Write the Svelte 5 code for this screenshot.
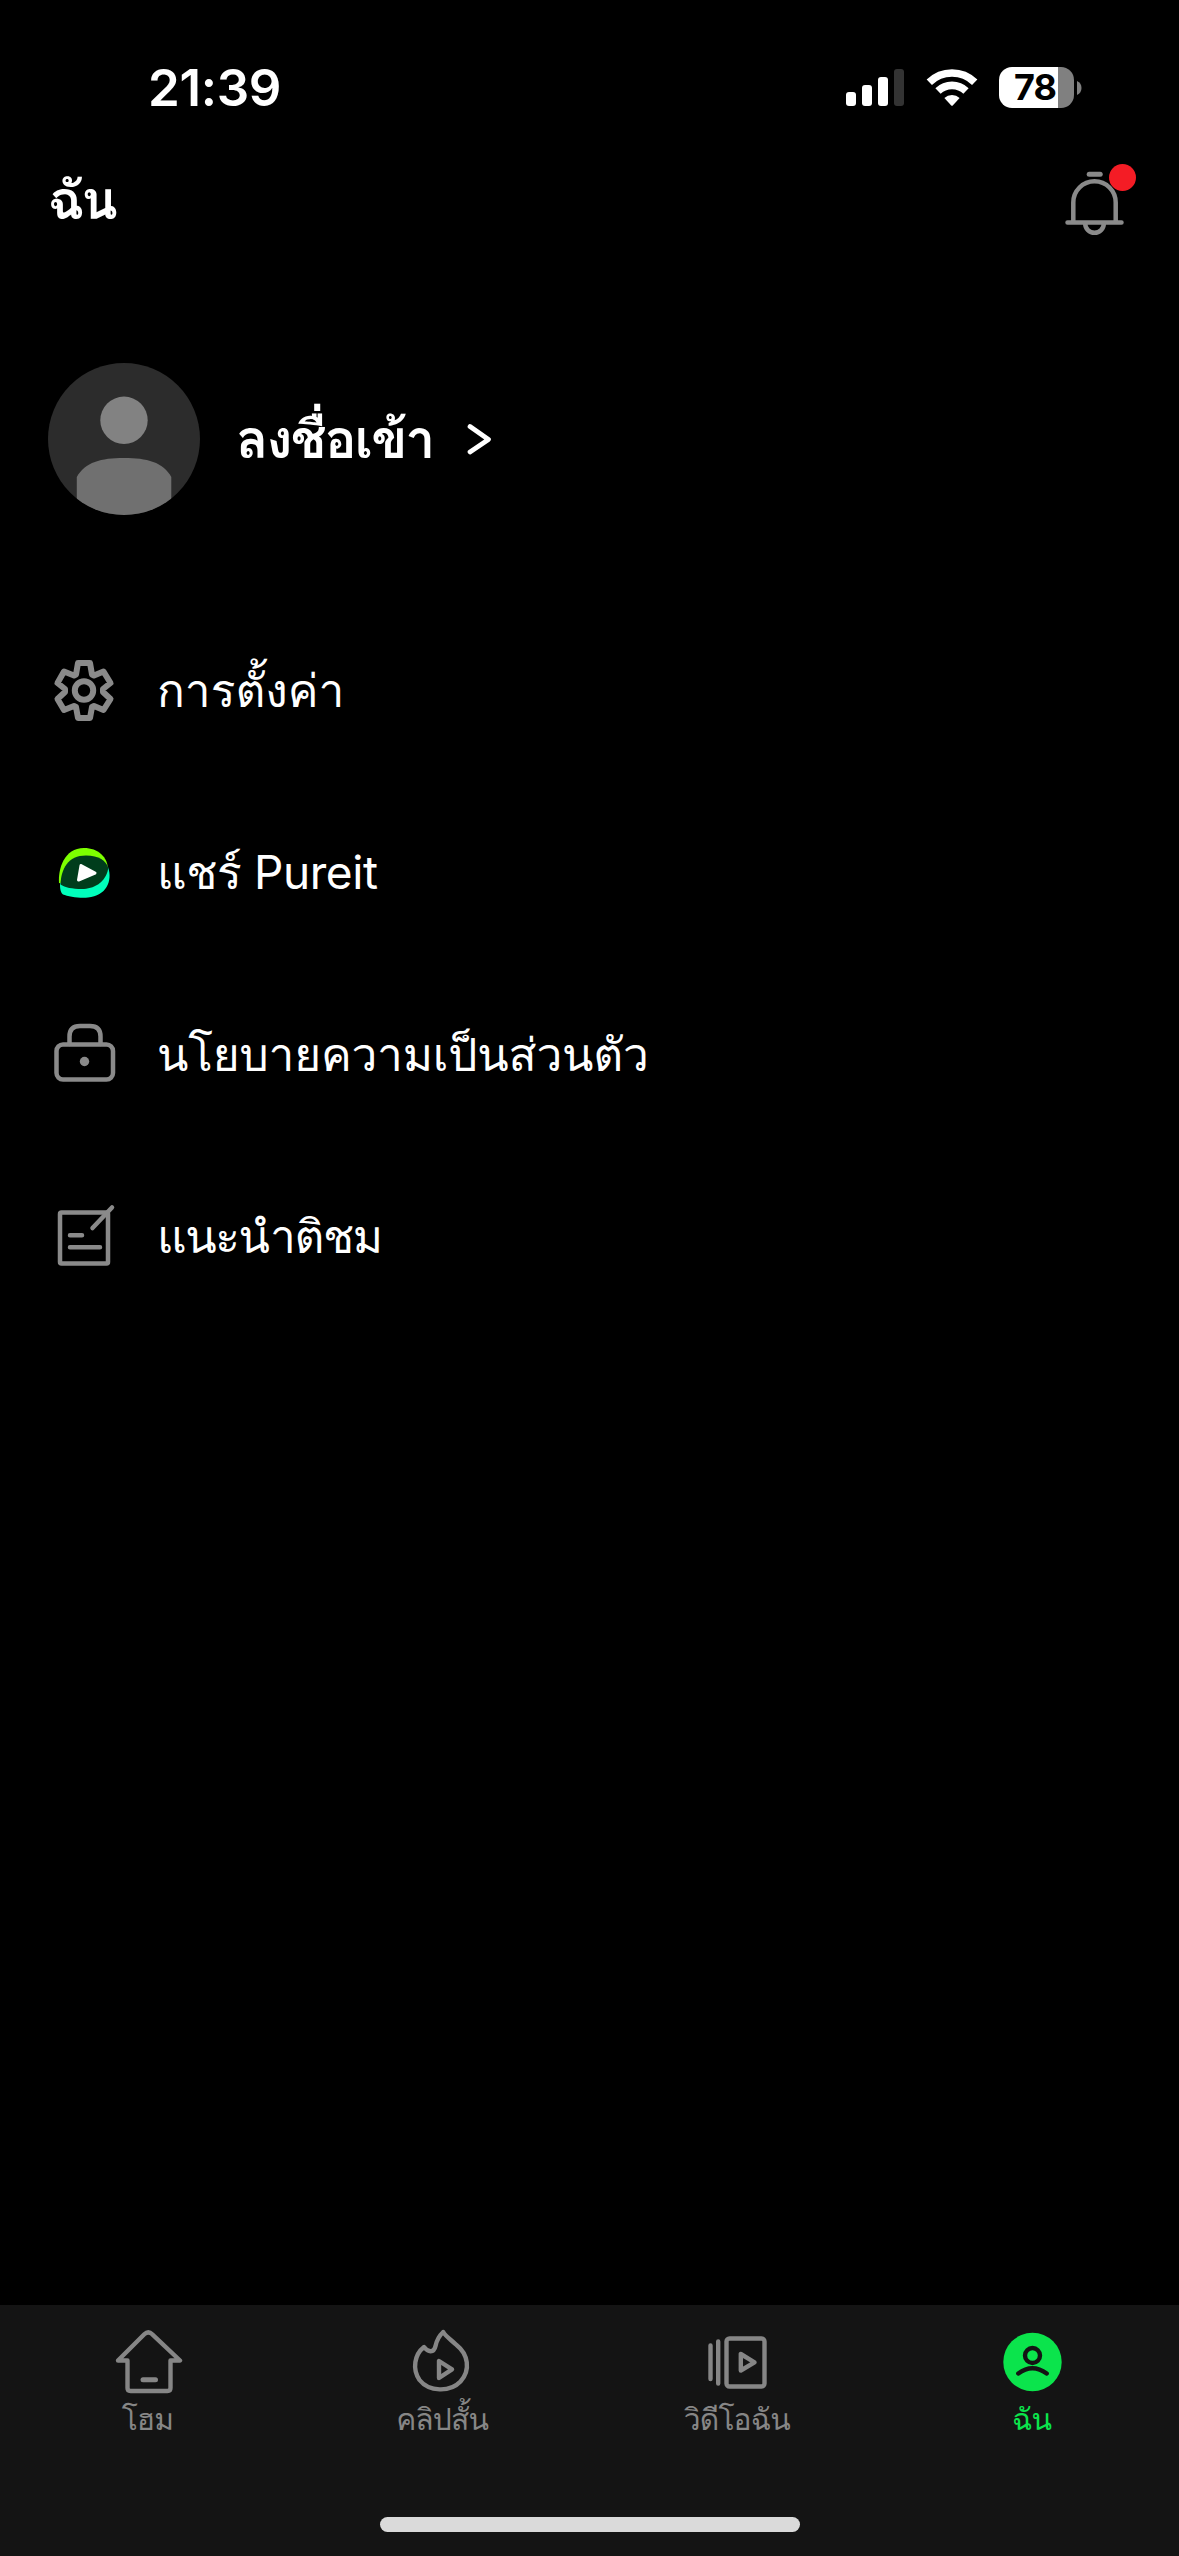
<script>
	const menu = [
		{ icon: 'gear', label: 'การตั้งค่า', tracking: 0 },
		{ icon: 'app', label: 'แชร์ Pureit', tracking: -0.4 },
		{ icon: 'lock', label: 'นโยบายความเป็นส่วนตัว', tracking: -0.2 },
		{ icon: 'feedback', label: 'แนะนำติชม', tracking: -1.4 }
	];

	const tabs = [
		{ icon: 'home', label: 'โฮม' },
		{ icon: 'clips', label: 'คลิปสั้น' },
		{ icon: 'videos', label: 'วิดีโอฉัน' },
		{ icon: 'me', label: 'ฉัน' }
	];

	let active = $state('me');
</script>

<div class="screen">
	<div class="status">
		<span class="time">21:39</span>
		<div class="indicators">
			<svg class="signal" width="58" height="38" viewBox="0 0 58 38" fill="#fff">
				<rect x="0" y="23" width="10" height="14" rx="3" />
				<rect x="16" y="16" width="10" height="21" rx="3" />
				<rect x="32" y="8" width="10" height="29" rx="3" />
				<rect x="48" y="0" width="10" height="37" rx="3" fill="#333" />
			</svg>
			<svg class="wifi" width="52" height="38" viewBox="0 0 52 38">
				<path d="M3.3 13.3a32.5 32.5 0 0 1 45.4 0M12 22a20.2 20.2 0 0 1 28 0" fill="none" stroke="#fff" stroke-width="7.6" />
				<path d="M18.4 29a11 11 0 0 1 15.2 0L27 36.2q-1 1-2 0z" fill="#fff" />
			</svg>
			<div class="battery"><span>78</span></div>
			<svg class="nub" width="5" height="14" viewBox="0 0 5 14"><path d="M0 0q4.500 2 4.500 7T0 14z" fill="#808080" /></svg>
		</div>
	</div>

	<header>
		<h1>ฉัน</h1>
		<div class="bell">
			<svg width="60" height="66" viewBox="0 0 60 66" fill="none" stroke="#8a8a8a" stroke-width="4.500" stroke-linecap="round">
				<path d="M24.200 4.300H35.200" stroke-width="5" />
				<path d="M8.300 51V32.500a21.200 21.200 0 0 1 42.400 0V51M2.500 52.500H56.500" />
				<path d="M20.200 53.500a9.300 9.300 0 0 0 18.600 0" />
			</svg>
			<i class="dot"></i>
		</div>
	</header>

	<section class="profile">
		<svg width="152" height="152" viewBox="0 0 152 152">
			<clipPath id="round"><circle cx="76" cy="76" r="76" /></clipPath>
			<g clip-path="url(#round)">
				<path d="M0 0H152V152H0z" fill="#2c2c2c" />
				<circle cx="76" cy="57.300" r="23.700" fill="#828282" />
				<path d="M28.800 152V114C37 99 53 95 76 95s39 4 47.300 19v38z" fill="#707070" />
			</g>
		</svg>
		<h2>ลงชื่อเข้า</h2>
		<svg class="chevron" width="26" height="32" viewBox="0 0 26 32">
			<path d="M3 3.500L21.500 16.500L3 29" fill="none" stroke="#fff" stroke-width="4.700" stroke-linecap="round" stroke-linejoin="round" />
		</svg>
	</section>

	<nav class="menu">
		{#each menu as item}
			<div class="row">
				<svg width="72" height="72" viewBox="0 0 72 72" fill="none" stroke="#8a8a8a" stroke-width="4.500" stroke-linecap="round" stroke-linejoin="round">
					{#if item.icon === 'gear'}
						<g stroke-width="6">
							<path d="M30 9H42L44 20.500L46 21.500L55.500 17.500L62.500 29L55 35V38L62.500 45L55.500 56L46 52L44 53L42 64H30L28 53L26 52L16 56L9.500 45L17 38V35L9.500 29L16 17.500L26 21.500L28 20.500z" />
							<circle cx="36" cy="36.500" r="9.200" />
						</g>
					{:else if item.icon === 'app'}
						<g stroke="none" transform="translate(0 1)">
							<path d="M11 46C10 32 16 11 36 11C50 11 60 20 60 33C60 42 30 50 11 46z" fill="#7dff00" />
							<path d="M12 46C30 50 50 45 60 30C65 44 58 59 40 60.500C32 61.500 20 59.500 15 57.500C12 55 12 50 12 46z" fill="#0fb" />
							<path d="M12.500 47.500C13 32 20 18.500 38 18.500C51 18.500 58 23.500 60.300 31C58 46 45 52 34 52C24 52 17 50.500 12.500 47.500z" fill="#003d1c" />
							<path d="M33 28.500L47 36L30.500 43z" fill="#fff" stroke="#fff" stroke-width="3" />
						</g>
					{:else if item.icon === 'lock'}
						<rect x="8.500" y="26.500" width="56.500" height="35" rx="6.500" />
						<path d="M21.500 26V18.500q0-10.500 10.500-10.500h10q10.500 0 10.500 10.500V26" />
						<circle cx="36.500" cy="43.500" r="4.700" fill="#8a8a8a" stroke="none" />
					{:else}
						<rect x="12" y="12.500" width="48" height="51" rx="1.500" />
						<path d="M44.500 28L64 7.500M22 35.300H34M22 47.200H52" />
					{/if}
				</svg>
				<span style="letter-spacing: {item.tracking}px">{item.label}</span>
			</div>
		{/each}
	</nav>

	<footer>
		<div class="tabs">
			{#each tabs as tab}
				<button class:active={tab.icon === active} onclick={() => (active = tab.icon)}>
					<svg width="72" height="72" viewBox="0 0 72 72" fill="none" stroke="currentColor" stroke-width="4.400" stroke-linecap="round" stroke-linejoin="round">
						{#if tab.icon === 'home'}
							<path d="M16.500 36.500H7L33.300 10.300Q37.300 6.300 41.300 10.300L69 36.500H59.500V64q0 3-3 3H19.500q-3 0-3-3z" />
							<path d="M32 55.700H44.500" stroke-width="5" />
						{:else if tab.icon === 'clips'}
							<path d="M18 23C8.500 30.500 6 45 13.500 56C23 68 44 68.500 54.500 57.500C65 46 62 30 50.500 21C44 15 39.500 12 37.200 8C34 11 31 15 29.500 22C28 29 22 28.500 18 23z" />
							<path d="M33 37V54L46 45.300z" />
						{:else if tab.icon === 'videos'}
							<rect x="25.500" y="14.500" width="38" height="48" rx="3" />
							<path d="M9.500 21.500V55M17.200 17.500V59.500" />
							<path d="M39.800 30V46.500L53.500 38.300z" />
						{:else}
							<circle cx="36.500" cy="38" r="29.200" fill="currentColor" stroke="none" />
							<circle cx="36.500" cy="31.500" r="7.500" stroke="#141414" />
							<path d="M22.300 49.500q14-10.500 28.400 0" stroke="#141414" />
						{/if}
					</svg>
					<span>{tab.label}</span>
				</button>
			{/each}
		</div>
		<div class="home-indicator"></div>
	</footer>
</div>

<style>
	:global(body) {
		background: #000;
	}
	.screen {
		display: flex;
		flex-direction: column;
		width: 1179px;
		height: 2556px;
		overflow: hidden;
		background: #000;
		color: #fff;
		font-family: Inter, Loma, sans-serif;
	}
	svg {
		display: block;
		flex: none;
	}
	h1,
	h2 {
		margin: 0;
		font-size: 53px;
		font-weight: 700;
		line-height: 70px;
		white-space: nowrap;
	}

	.status {
		display: flex;
		justify-content: space-between;
		height: 160px;
		padding: 0 97px 0 148px;
		box-sizing: border-box;
	}
	.time {
		padding-top: 57px;
		font-size: 51px;
		font-weight: 600;
		line-height: 62px;
		letter-spacing: -0.3px;
	}
	.indicators {
		display: flex;
		padding-top: 67px;
	}
	.signal {
		margin-top: 2px;
	}
	.wifi {
		margin: 2px 21px 0 22px;
	}
	.battery {
		width: 75px;
		height: 41px;
		border-radius: 13px;
		background: linear-gradient(90deg, #fff 59px, #808080 59px);
		color: #000;
		font-size: 36px;
		font-weight: 700;
		line-height: 41px;
		text-align: center;
		letter-spacing: -1px;
	}
	.battery span {
		padding-right: 3px;
	}
	.nub {
		margin: 14px 0 0 3px;
	}

	header {
		display: flex;
		justify-content: space-between;
		height: 203px;
		padding: 0 54px 0 48px;
	}
	h1 {
		padding-top: 5px;
		letter-spacing: -2.5px;
	}
	.bell {
		position: relative;
		padding-top: 10px;
		width: 60px;
	}
	.dot {
		position: absolute;
		top: 4px;
		left: 44px;
		width: 27px;
		height: 27px;
		border-radius: 50%;
		background: #f41c25;
	}

	.profile {
		display: flex;
		align-items: center;
		height: 152px;
		padding-left: 48px;
	}
	h2 {
		margin-left: 36px;
		width: 231px;
		letter-spacing: -1.8px;
	}

	.menu {
		display: flex;
		flex-direction: column;
		padding-top: 84px;
		flex: 1;
	}
	.row {
		display: flex;
		align-items: center;
		gap: 37px;
		height: 182px;
		padding-left: 48px;
		font-size: 46px;
		line-height: 70px;
	}

	footer {
		height: 251px;
		background: #141414;
	}
	.tabs {
		display: grid;
		grid-template-columns: repeat(4, 1fr);
		height: 212px;
	}
	button {
		display: flex;
		flex-direction: column;
		align-items: center;
		padding: 19px 0 0;
		border: 0;
		background: none;
		color: #868686;
		font: 30px/47px Inter, Loma, sans-serif;
		letter-spacing: -0.9px;
	}
	button.active {
		color: #0be44c;
	}
	.home-indicator {
		width: 420px;
		height: 15px;
		margin: 0 auto;
		border-radius: 8px;
		background: #dadada;
	}
</style>
